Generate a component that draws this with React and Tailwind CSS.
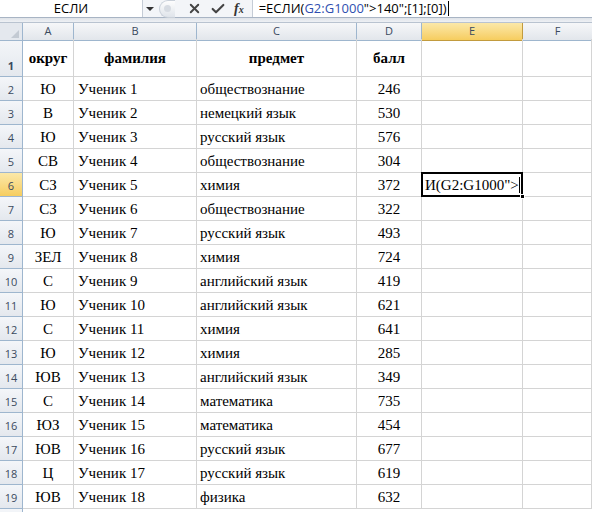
import { X, Check } from 'lucide-react'

const rows = [
  ['Ю', 'Ученик 1', 'обществознание', 246],
  ['В', 'Ученик 2', 'немецкий язык', 530],
  ['Ю', 'Ученик 3', 'русский язык', 576],
  ['СВ', 'Ученик 4', 'обществознание', 304],
  ['СЗ', 'Ученик 5', 'химия', 372],
  ['СЗ', 'Ученик 6', 'обществознание', 322],
  ['Ю', 'Ученик 7', 'русский язык', 493],
  ['ЗЕЛ', 'Ученик 8', 'химия', 724],
  ['С', 'Ученик 9', 'английский язык', 419],
  ['Ю', 'Ученик 10', 'английский язык', 621],
  ['С', 'Ученик 11', 'химия', 641],
  ['Ю', 'Ученик 12', 'химия', 285],
  ['ЮВ', 'Ученик 13', 'английский язык', 349],
  ['С', 'Ученик 14', 'математика', 735],
  ['ЮЗ', 'Ученик 15', 'математика', 454],
  ['ЮВ', 'Ученик 16', 'русский язык', 677],
  ['Ц', 'Ученик 17', 'русский язык', 619],
  ['ЮВ', 'Ученик 18', 'физика', 632],
]

const cols = 'grid grid-cols-[23px_51px_123px_160px_65px_101px_1fr]'
const cell = 'border-r border-b border-[#d4d4d4] flex items-end pb-[1px] leading-[20px]'
const headBase =
  'border-r border-b border-[#9eb6ce] flex items-end justify-center pb-[2px] leading-[16px] text-[11px] text-[#3a4a5e] font-["Open_Sans",sans-serif]'
const rowHead = `${headBase} bg-gradient-to-b from-[#f4f6f9] to-[#e4e8ee]`
const rowHeadActive = `${headBase} bg-gradient-to-b from-[#fbe8a8] to-[#f6cd5e]`

function FormulaBar() {
  return (
    <div className="flex h-[18px] bg-[#f3f5f8] border-b border-[#a8b4c4] font-['Open_Sans',sans-serif] text-[13px] text-black">
      {/* name box */}
      <div className="w-[143px] bg-white border-r border-[#c5ccd6] flex items-center justify-center">
        ЕСЛИ
      </div>
      <div className="w-[14px] flex items-center justify-center">
        <span className="border-x-[4px] border-x-transparent border-t-[4px] border-t-[#333]" />
      </div>
      <div className="flex items-center ml-[2px]">
        <div className="w-[16px] h-[18px] rounded-l-full bg-gradient-to-b from-[#fdfdfd] to-[#dfe4ea] border border-[#c9d0d9] border-r-0 flex items-center justify-center">
          <span className="w-[7px] h-[7px] rounded-full bg-[#d6dbe2]" />
        </div>
      </div>
      <div className="flex items-center gap-[8px] pl-[12px] pr-[8px]">
        <X size={15} strokeWidth={3} className="text-[#444]" />
        <Check size={16} strokeWidth={3.2} className="text-[#444]" />
        <span className="font-['Liberation_Serif',serif] italic font-bold text-[14px] text-[#333] leading-none">
          f<span className="text-[10px]">x</span>
        </span>
      </div>
      <div className="flex-1 bg-white border-l border-[#c5ccd6] flex items-center pl-[6px] whitespace-nowrap">
        =ЕСЛИ(<span className="text-[#2f4fb0]">G2:G1000</span>"&gt;140";[1];[0])
        <span className="w-px h-[15px] bg-black ml-[1px]" />
      </div>
    </div>
  )
}

export default function App() {
  return (
    <div className="w-[592px] h-[512px] overflow-hidden bg-white">
      <FormulaBar />
      <div className="h-[5px] bg-gradient-to-b from-[#dfe3e8] to-[#eef1f5] border-b border-[#b9c3d0]" />

      {/* column headers */}
      <div className={`${cols} h-[16px] font-['Open_Sans',sans-serif] text-[11px] text-[#3a4a5e]`}>
        <div className="border-r border-b border-[#9eb6ce] bg-[#e4e8ee] relative">
          <span className="absolute right-[3px] bottom-[2px] border-l-[8px] border-l-transparent border-b-[8px] border-b-[#c3cad3]" />
        </div>
        {['A', 'B', 'C', 'D'].map((c) => (
          <div key={c} className="border-r border-b border-[#9eb6ce] bg-gradient-to-b from-[#f6f7f9] to-[#e2e6eb] flex items-center justify-center">
            {c}
          </div>
        ))}
        <div className="border-r border-b border-[#c29b3e] bg-gradient-to-b from-[#fbe8a8] to-[#f6cd5e] flex items-center justify-center">
          E
        </div>
        <div className="border-b border-[#9eb6ce] bg-gradient-to-b from-[#f6f7f9] to-[#e2e6eb] flex items-center justify-center">
          F
        </div>
      </div>

      {/* header row */}
      <div className={`${cols} h-[38px] font-['Liberation_Serif',serif] text-[15px] font-bold`}>
        <div className={rowHead}>1</div>
        <div className="border-r border-b border-[#d4d4d4] flex items-center justify-center pt-[1px]">округ</div>
        <div className="border-r border-b border-[#d4d4d4] flex items-center justify-center pt-[1px]">фамилия</div>
        <div className="border-r border-b border-[#d4d4d4] flex items-center justify-center pt-[1px]">предмет</div>
        <div className="border-r border-b border-[#d4d4d4] flex items-center justify-center pt-[1px]">балл</div>
        <div className={cell} />
        <div className={cell} />
      </div>

      {rows.map(([okrug, name, subj, score], i) => {
        const n = i + 2
        return (
          <div key={n} className={`${cols} h-[24px] font-['Liberation_Serif',serif] text-[15px] text-black`}>
            <div className={n === 6 ? rowHeadActive : rowHead}>{n}</div>
            <div className={`${cell} justify-center`}>{okrug}</div>
            <div className={`${cell} pl-[4px]`}>{name}</div>
            <div className={`${cell} pl-[3px]`}>{subj}</div>
            <div className={`${cell} justify-center`}>{score}</div>
            {n === 6 ? (
              <div className={`${cell} relative`}>
                <div className="absolute -left-px -top-px right-[-1px] bottom-[-1px] border-2 border-black flex items-end leading-[20px] pl-[2px] overflow-hidden whitespace-nowrap">
                  И(G2:G1000"&gt;
                  <span className="w-px h-[16px] mb-[2px] bg-black" />
                </div>
                <span className="absolute right-[-3px] bottom-[-3px] w-[5px] h-[5px] bg-black border border-white" />
              </div>
            ) : (
              <div className={cell} />
            )}
            <div className={cell} />
          </div>
        )
      })}
      <div className={`${cols} h-[24px]`}>
        <div className={rowHead} />
      </div>
    </div>
  )
}
